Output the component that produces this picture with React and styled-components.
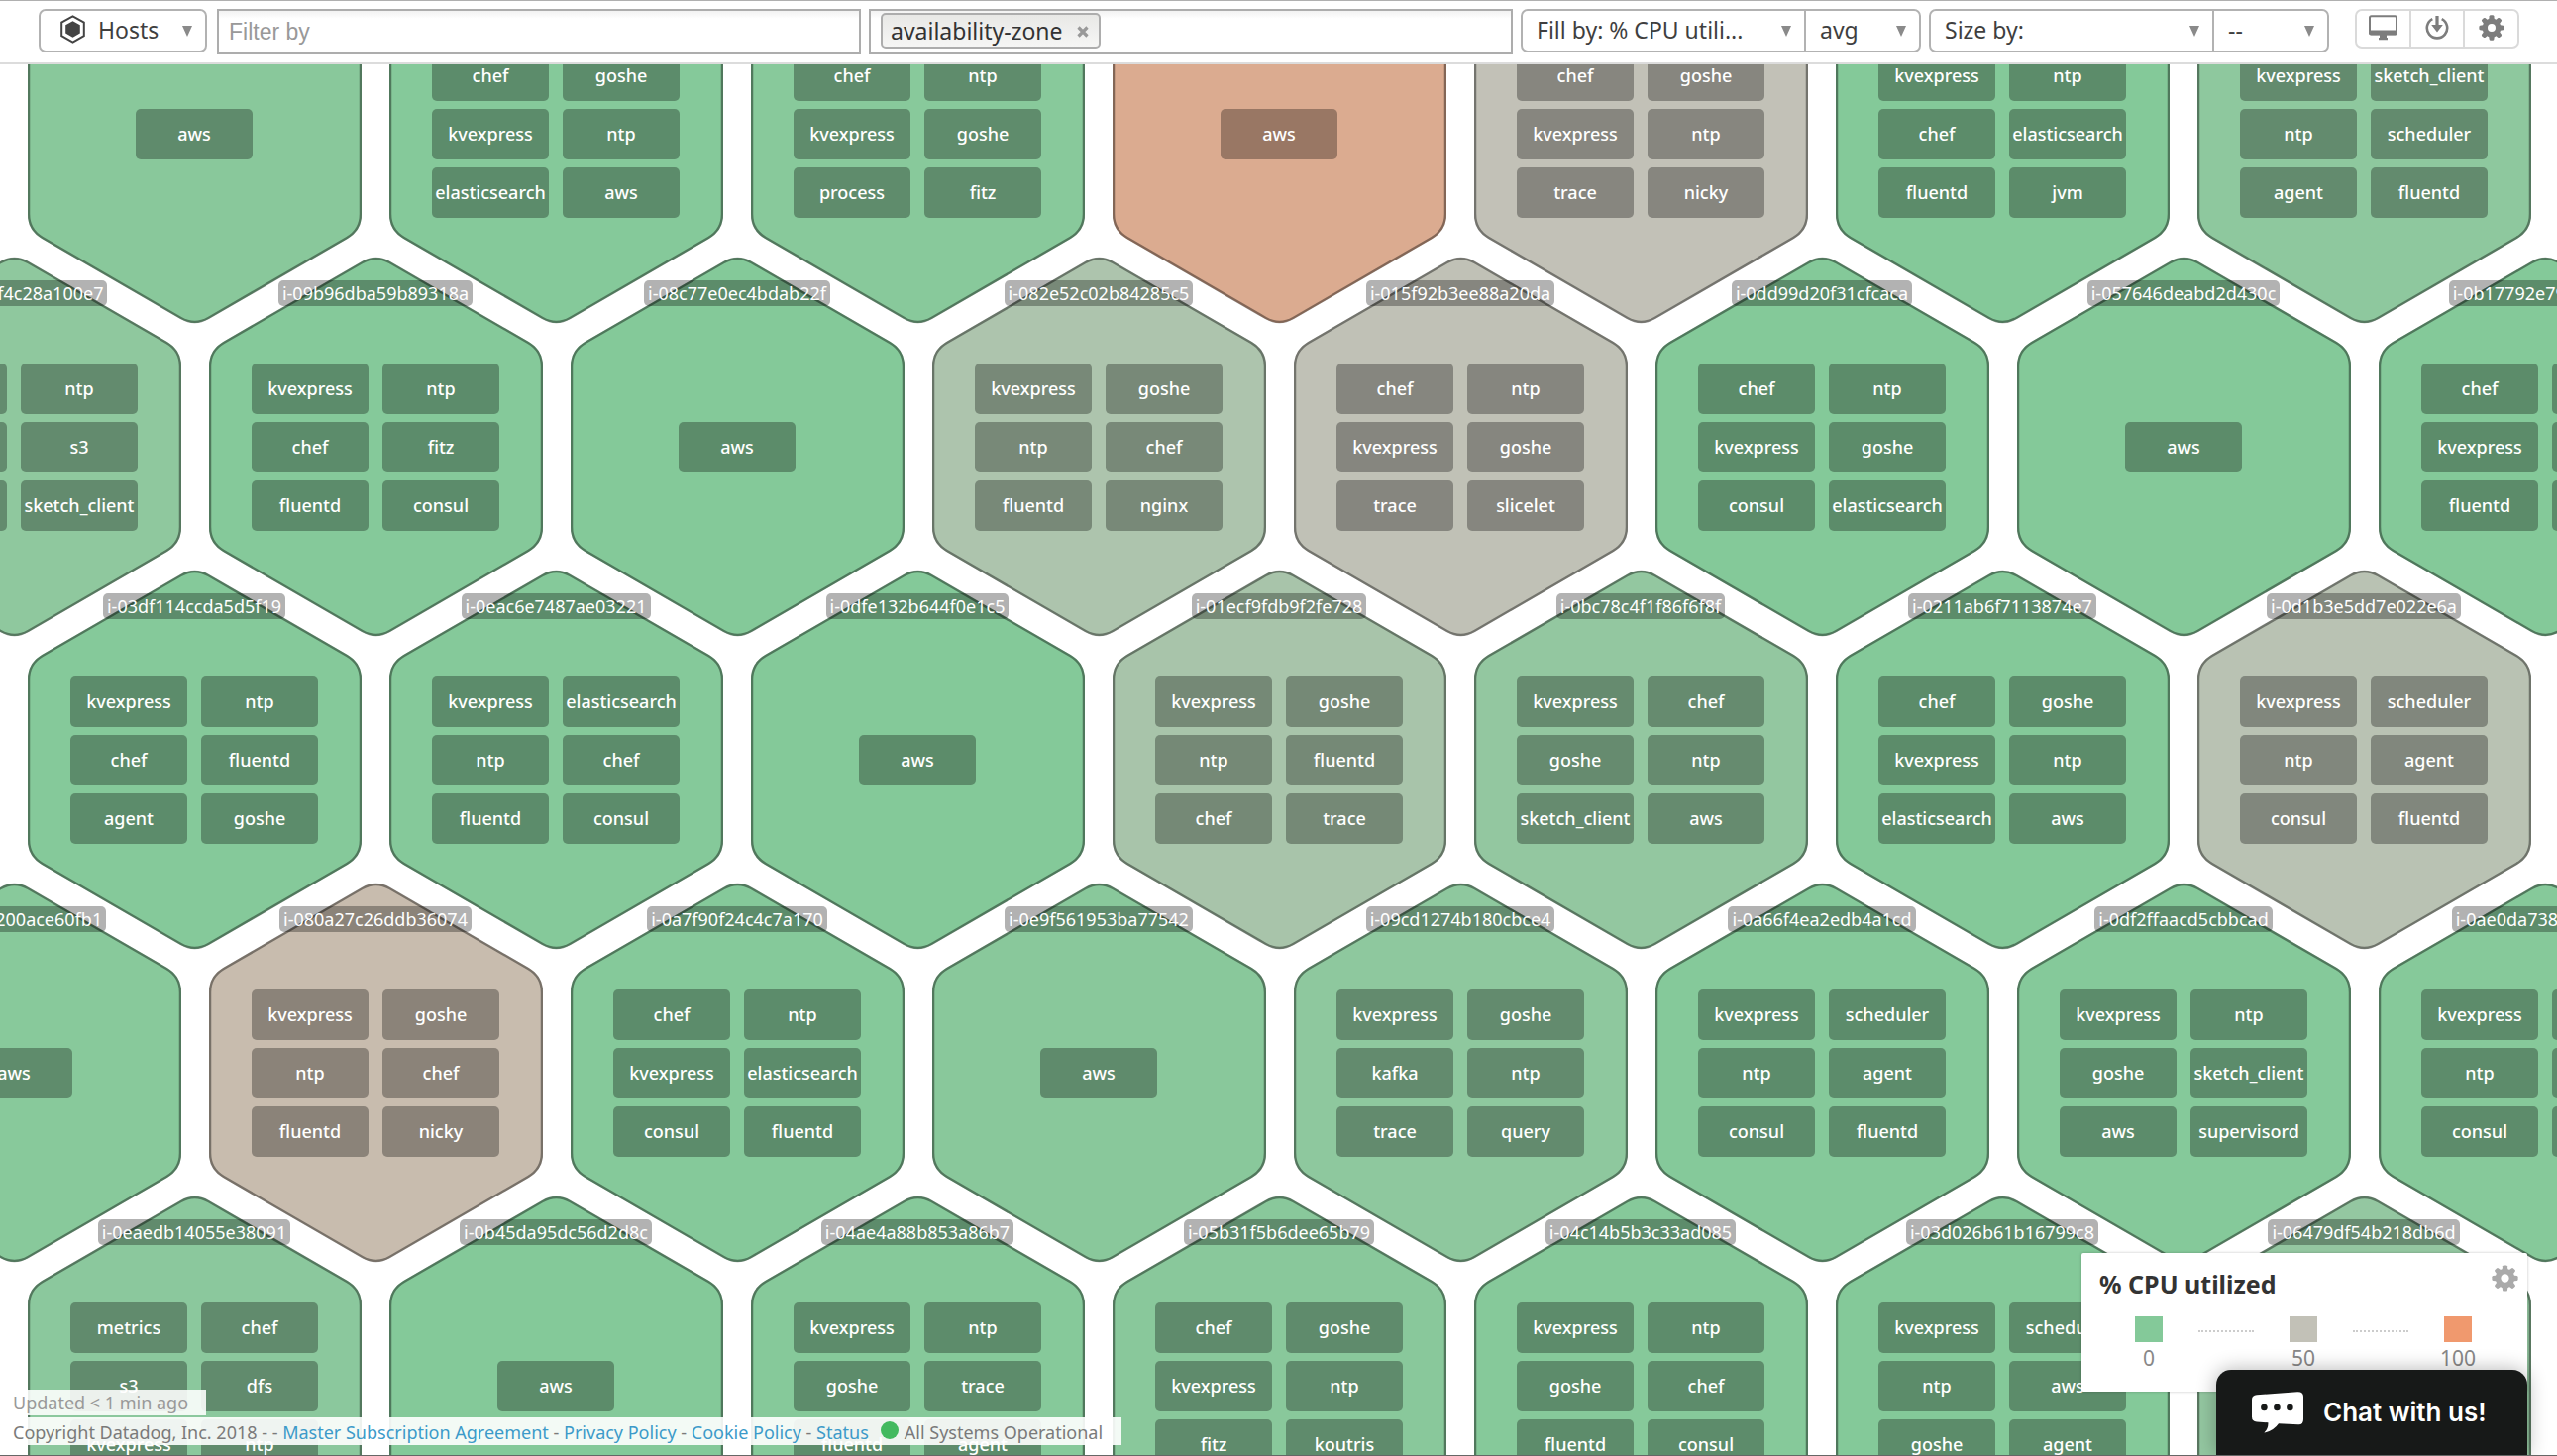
import React from "react";
import styled, { createGlobalStyle } from "styled-components";

const GlobalStyle = createGlobalStyle`
  *, *::before, *::after { box-sizing: border-box; }
  body {
    margin: 0;
    background: #fff;
    color: #3f3f3f;
    font-family: "Noto Sans", "Open Sans", sans-serif;
  }
  ul { margin: 0; padding: 0; list-style: none; }
`;

/* ---------- page ---------- */

const Page = styled.div`
  position: relative;
  display: flex;
  flex-direction: column;
  height: 100vh;
  overflow: hidden;
  border-top: 1px solid #b0b0b0;
  border-bottom: 1px solid #666;
`;

/* ---------- toolbar ---------- */

const Toolbar = styled.header`
  display: flex;
  flex: none;
  align-items: flex-start;
  gap: 8px;
  height: 64px;
  padding: 8px 38px 0 39px;
  border-bottom: 2px solid #dcdcdc;
  background: #fff;
`;

const SelectGroup = styled.div`
  display: flex;
  flex: none;
  width: ${(p) => p.$width}px;
  height: 44px;
  margin-right: ${(p) => (p.$lead ? 2 : 0)}px;
  border: 2px solid #b2b2b2;
  border-radius: 7px;
  background: #fff;
`;

const SelectBox = styled.div`
  position: relative;
  flex: ${(p) => (p.$narrow ? "none" : 1)};
  width: ${(p) => (p.$narrow ? "116px" : "auto")};
  border-left: ${(p) => (p.$narrow ? "2px solid #b2b2b2" : "0")};
`;

const Select = styled.select`
  width: 100%;
  height: 40px;
  padding: 0 32px 2px ${(p) => (p.$withIcon ? 58 : 14)}px;
  border: 0;
  background: transparent;
  color: #3f3f3f;
  font: 400 23px/38px "Noto Sans", "Open Sans", sans-serif;
  appearance: none;
`;

const Arrow = styled.span`
  position: absolute;
  top: 15px;
  right: 13px;
  border: 5px solid transparent;
  border-top: 11px solid #8a8a8a;
  border-bottom: 0;
  pointer-events: none;
`;

const HostsMark = styled.svg`
  position: absolute;
  top: 4px;
  left: 19px;
  pointer-events: none;
`;

const Field = styled.div`
  display: flex;
  flex: 1 1 0;
  min-width: 0;
  align-items: center;
  height: 46px;
  padding: 0 10px;
  border: 2px solid #adadad;
  background: linear-gradient(#f2f2f2, #fff 8px);
`;

const FieldInput = styled.input`
  flex: 1;
  min-width: 0;
  height: 40px;
  padding: 0;
  border: 0;
  outline: 0;
  background: transparent;
  color: #333;
  font: 400 23px/40px "Liberation Sans", Arial, sans-serif;
  &::placeholder { color: #999; opacity: 1; }
`;

const Chip = styled.span`
  display: flex;
  flex: none;
  align-items: center;
  gap: 14px;
  height: 36px;
  padding: 0 10px 0 8px;
  border: 2px solid #adadad;
  border-radius: 5px;
  background: linear-gradient(#e8e8e6, #f6f6f5);
  color: #333;
  font-size: 23px;
  line-height: 32px;
`;

const ChipRemove = styled.button`
  display: flex;
  padding: 2px 0 0;
  border: 0;
  background: none;
`;

const ChipField = styled(Field)`
  padding-bottom: 2px;
`;

const IconGroup = styled.div`
  display: flex;
  flex: none;
  width: 166px;
  height: 40px;
  margin-left: 18px;
  border: 2px solid #dadada;
  border-radius: 7px;
`;

const IconButton = styled.button`
  display: flex;
  flex: 1;
  align-items: center;
  justify-content: center;
  padding: 0 0 3px;
  border: 0;
  background: none;
  & + & { border-left: 2px solid #dadada; }
`;

/* ---------- host map ---------- */

const HostMap = styled.main`
  flex: 1;
  min-height: 0;
  overflow: hidden;
`;

const Board = styled.div`
  margin-top: -122px;
`;

const HexRow = styled.ul`
  display: flex;
  gap: 28px;
  width: max-content;
  margin: 0 0 -68px ${(p) => (p.$shifted ? -154 : -337)}px;
`;

const HexCell = styled.li`
  display: grid;
  flex: none;
  width: 337px;
  height: 384px;
  & > * { grid-area: 1 / 1; }
`;

const HexBody = styled.div`
  display: flex;
  flex-direction: column;
  align-items: center;
  padding: 24px 1px 0 0;
  color: #fff;
  font-size: 18px;
  white-space: nowrap;
`;

const HostName = styled.span`
  height: 26px;
  padding: 0 4px;
  border-radius: 5px;
  background: ${(p) => (p.$empty ? "none" : "rgba(0, 0, 0, 0.3)")};
  line-height: 26px;
`;

const Tags = styled.ul`
  display: grid;
  grid-template-columns: repeat(${(p) => p.$columns}, 118px);
  grid-auto-rows: 51px;
  gap: 8px 14px;
  align-content: center;
  height: 169px;
  margin-top: 58px;
`;

const Tag = styled.li`
  border-radius: 5px;
  background: rgba(0, 0, 0, 0.3);
  font-weight: 500;
  line-height: 51px;
  text-align: center;
`;

/* ---------- overlays ---------- */

const Footer = styled.footer`
  position: absolute;
  bottom: 10px;
  left: 0;
  display: flex;
  flex-direction: column;
  align-items: flex-start;
  gap: 2px;
  font-size: 18px;
`;

const Updated = styled.div`
  height: 26px;
  padding: 0 18px 0 13px;
  background: rgba(255, 255, 255, 0.88);
  color: #999;
  line-height: 26px;
`;

const Legal = styled.div`
  display: flex;
  align-items: center;
  height: 28px;
  padding: 2px 19px 0 13px;
  background: rgba(255, 255, 255, 0.9);
  color: #7a7a7a;
  line-height: 26px;
  white-space: pre;
  a { color: #3c9ac9; text-decoration: none; }
`;

const StatusDot = styled.span`
  width: 18px;
  height: 18px;
  margin: 0 6px 4px 12px;
  border-radius: 50%;
  background: #43b95f;
`;

const Legend = styled.section`
  position: absolute;
  right: 30px;
  bottom: 64px;
  width: 450px;
  height: 140px;
  padding-top: 13px;
  border-radius: 2px;
  background: #fff;
  box-shadow: 0 0 3px rgba(0, 0, 0, 0.25);
`;

const LegendHead = styled.div`
  display: flex;
  align-items: flex-start;
  justify-content: space-between;
  height: 51px;
  padding: 0 9px 0 18px;
`;

const LegendTitle = styled.h2`
  margin: 0;
  color: #333;
  font-size: 25px;
  font-weight: 700;
  line-height: 36px;
`;

const LegendSettings = styled.button`
  display: flex;
  margin-top: -1px;
  padding: 0;
  border: 0;
  background: none;
`;

const Scale = styled.div`
  display: flex;
  gap: 22px;
  padding: 0 42px 0 40px;
`;

const Stop = styled.div`
  display: flex;
  flex-direction: column;
  align-items: center;
  width: 56px;
  color: #888;
  font-size: 21px;
  line-height: 32px;
  &::before {
    content: "";
    width: 28px;
    height: 26px;
    background: ${(p) => p.$color};
  }
`;

const Dots = styled.span`
  flex: 1;
  height: 16px;
  border-bottom: 2px dotted #ccc;
`;

const ChatButton = styled.button`
  position: absolute;
  right: 30px;
  bottom: 0;
  display: flex;
  align-items: center;
  gap: 20px;
  width: 314px;
  height: 86px;
  padding: 0 0 0 36px;
  border: 0;
  border-radius: 15px 15px 0 0;
  background: #171918;
  box-shadow: 0 0 20px rgba(0, 0, 0, 0.3);
  color: #fff;
  font: 600 26px/30px Inter, "Noto Sans", sans-serif;
`;

/* ---------- drawings ---------- */

function Gear({ size, color }) {
  return (
    <svg width={size} height={size} viewBox="0 0 28 28" aria-hidden="true">
      <circle cx="14" cy="14" r="7.2" fill="none" stroke={color} strokeWidth="5.8" />
      {[0, 45, 90, 135, 180, 225, 270, 315].map((a) => (
        <path
          key={a}
          d="M10.8 6 L11.5 1.4 Q11.8 .4 12.8 .4 H15.2 Q16.2 .4 16.5 1.4 L17.2 6 Z"
          fill={color}
          transform={`rotate(${a} 14 14)`}
        />
      ))}
    </svg>
  );
}

function Monitor() {
  return (
    <svg width="29" height="26" viewBox="0 0 29 26" aria-hidden="true">
      <rect x="1" y="1.2" width="27" height="18" rx="1.6" fill="none" stroke="#7d7d7d" strokeWidth="2" />
      <path d="M0 15.5 H29 V18.6 Q29 20.4 27.2 20.4 H1.8 Q0 20.4 0 18.6 Z" fill="#7d7d7d" />
      <path d="M11 20 H18 V23 H19 V25.2 H10 V23 H11 Z" fill="#7d7d7d" />
    </svg>
  );
}

function PowerArrow() {
  return (
    <svg width="24" height="26" viewBox="0 0 24 26" aria-hidden="true">
      <path d="M7.3 4.1 A10.2 10.2 0 1 0 16.7 4.1" fill="none" stroke="#7d7d7d" strokeWidth="2.6" />
      <path d="M10.4 1 H13.6 V10 H17.8 L12 17.6 L6.2 10 H10.4 Z" fill="#7d7d7d" />
    </svg>
  );
}

function Cross() {
  return (
    <svg width="12" height="12" viewBox="0 0 12 12" aria-hidden="true">
      <path d="M1.5 1.5 L10.5 10.5 M10.5 1.5 L1.5 10.5" stroke="#999" strokeWidth="3.2" />
    </svg>
  );
}

function Bubble() {
  return (
    <svg width="52" height="42" viewBox="0 0 52 42" aria-hidden="true">
      <path
        d="M5 3.2 L46 .3 Q52 0 52 5 V28 Q52 33.4 47 33.2 L27 32.2 Q22 39.5 12.4 41.6 Q16.8 37 16.4 31.2 L5 30.6 Q0 30.2 0 25.6 V8 Q0 3.6 5 3.2 Z"
        fill="#fff"
      />
      <circle cx="12.4" cy="16" r="3.3" fill="#171918" />
      <circle cx="25.4" cy="16" r="3.3" fill="#171918" />
      <circle cx="38.4" cy="16" r="3.3" fill="#171918" />
    </svg>
  );
}

const CORNERS = [
  [168.5, -2],
  [336, 95],
  [336, 289],
  [168.5, 386],
  [1, 289],
  [1, 95],
];

function roundedPath(points, cut) {
  const toward = ([x1, y1], [x2, y2]) => {
    const k = cut / Math.hypot(x2 - x1, y2 - y1);
    return `${(x1 + (x2 - x1) * k).toFixed(2)} ${(y1 + (y2 - y1) * k).toFixed(2)}`;
  };
  const n = points.length;
  return (
    points
      .map((p, i) => {
        const before = toward(p, points[(i + n - 1) % n]);
        const after = toward(p, points[(i + 1) % n]);
        return `${i ? "L" : "M"}${before} Q${p[0]} ${p[1]} ${after}`;
      })
      .join(" ") + " Z"
  );
}

const HEX_PATH = roundedPath(CORNERS, 16);

/* ---------- data ---------- */

const LOW = [132, 201, 153];
const MID = [194, 193, 183];
const HIGH = [240, 153, 110];

function cpuColor(cpu) {
  const [a, b, t] = cpu <= 50 ? [LOW, MID, cpu / 50] : [MID, HIGH, (cpu - 50) / 50];
  return `rgb(${a.map((v, i) => Math.round(v + (b[i] - v) * t)).join(", ")})`;
}

const host = (name, cpu, tags) => ({ name, cpu, tags: tags ? tags.split(" ") : [] });

const ROWS = [
  [
    host("", 1, ""),
    host("", 4, "aws"),
    host("", 1, "chef goshe kvexpress ntp elasticsearch aws"),
    host("", 3, "chef ntp kvexpress goshe process fitz"),
    host("", 77, "aws"),
    host("", 50, "chef goshe kvexpress ntp trace nicky"),
    host("", 0, "kvexpress ntp chef elasticsearch fluentd jvm"),
    host("", 8, "kvexpress sketch_client ntp scheduler agent fluentd"),
  ],
  [
    host("i-0b52d9f4c28a100e7", 9, "chef ntp aws s3 fluentd sketch_client"),
    host("i-09b96dba59b89318a", 1, "kvexpress ntp chef fitz fluentd consul"),
    host("i-08c77e0ec4bdab22f", 0, "aws"),
    host("i-082e52c02b84285c5", 33, "kvexpress goshe ntp chef fluentd nginx"),
    host("i-015f92b3ee88a20da", 48, "chef ntp kvexpress goshe trace slicelet"),
    host("i-0dd99d20f31cfcaca", 0, "chef ntp kvexpress goshe consul elasticsearch"),
    host("i-057646deabd2d430c", 0, "aws"),
    host("i-0b17792e79d6bd0ca", 0, "chef ntp kvexpress goshe fluentd aws"),
  ],
  [
    host("", 1, ""),
    host("i-03df114ccda5d5f19", 1, "kvexpress ntp chef fluentd agent goshe"),
    host("i-0eac6e7487ae03221", 1, "kvexpress elasticsearch ntp chef fluentd consul"),
    host("i-0dfe132b644f0e1c5", 0, "aws"),
    host("i-01ecf9fdb9f2fe728", 29, "kvexpress goshe ntp fluentd chef trace"),
    host("i-0bc78c4f1f86f6f8f", 12, "kvexpress chef goshe ntp sketch_client aws"),
    host("i-0211ab6f7113874e7", 0, "chef goshe kvexpress ntp elasticsearch aws"),
    host("i-0d1b3e5dd7e022e6a", 43, "kvexpress scheduler ntp agent consul fluentd"),
  ],
  [
    host("i-0e46c1200ace60fb1", 3, "aws"),
    host("i-080a27c26ddb36074", 56, "kvexpress goshe ntp chef fluentd nicky"),
    host("i-0a7f90f24c4c7a170", 1, "chef ntp kvexpress elasticsearch consul fluentd"),
    host("i-0e9f561953ba77542", 4, "aws"),
    host("i-09cd1274b180cbce4", 8, "kvexpress goshe kafka ntp trace query"),
    host("i-0a66f4ea2edb4a1cd", 1, "kvexpress scheduler ntp agent consul fluentd"),
    host("i-0df2ffaacd5cbbcad", 1, "kvexpress ntp goshe sketch_client aws supervisord"),
    host("i-0ae0da738e2f4b6c1", 2, "kvexpress aws ntp chef consul fitz"),
  ],
  [
    host("", 1, ""),
    host("i-0eaedb14055e38091", 6, "metrics chef s3 dfs kvexpress ntp"),
    host("i-0b45da95dc56d2d8c", 0, "aws"),
    host("i-04ae4a88b853a86b7", 2, "kvexpress ntp goshe trace fluentd agent"),
    host("i-05b31f5b6dee65b79", 4, "chef goshe kvexpress ntp fitz koutris"),
    host("i-04c14b5b3c33ad085", 2, "kvexpress ntp goshe chef fluentd consul"),
    host("i-03d026b61b16799c8", 0, "kvexpress scheduler ntp aws goshe agent"),
    host("i-06479df54b218db6d", 13, "kvexpress ntp chef goshe fluentd aws"),
  ],
];

/* ---------- parts ---------- */

function Hex({ name, cpu, tags }) {
  return (
    <HexCell>
      <svg width="337" height="384" viewBox="0 0 337 384" aria-hidden="true">
        <path d={HEX_PATH} fill={cpuColor(cpu)} stroke={cpuColor(cpu)} strokeWidth="2" />
        <path d={HEX_PATH} fill="none" stroke="rgba(0, 0, 0, 0.4)" strokeWidth="2.5" />
      </svg>
      <HexBody>
        <HostName $empty={!name}>{name}</HostName>
        <Tags $columns={tags.length > 1 ? 2 : 1}>
          {tags.map((tag) => (
            <Tag key={tag}>{tag}</Tag>
          ))}
        </Tags>
      </HexBody>
    </HexCell>
  );
}

function Picker({ label, text, narrow, withIcon, children }) {
  return (
    <SelectBox $narrow={narrow}>
      {children}
      <Select aria-label={label} $withIcon={withIcon} defaultValue={text}>
        <option value={text}>{text}</option>
      </Select>
      <Arrow />
    </SelectBox>
  );
}

export default function App() {
  return (
    <Page>
      <GlobalStyle />
      <Toolbar>
        <SelectGroup $width={170} $lead>
          <Picker label="Resource" text="Hosts" withIcon>
            <HostsMark width="27" height="29" viewBox="0 0 27 29" aria-hidden="true">
              <path d="M13.5 1.4 L24.8 7.6 V21.2 L13.5 27.6 L2.2 21.2 V7.6 Z" fill="none" stroke="#444" strokeWidth="2" />
              <path d="M13.5 6.2 L20.8 10.3 V18.6 L13.5 22.8 L6.2 18.6 V10.3 Z" fill="#444" />
            </HostsMark>
          </Picker>
        </SelectGroup>
        <Field>
          <FieldInput type="text" placeholder="Filter by" aria-label="Filter by" />
        </Field>
        <ChipField>
          <Chip>
            availability-zone
            <ChipRemove type="button" aria-label="Remove availability-zone">
              <Cross />
            </ChipRemove>
          </Chip>
          <FieldInput type="text" aria-label="Group by" />
        </ChipField>
        <SelectGroup $width={404}>
          <Picker label="Fill by" text="Fill by: % CPU utili..." />
          <Picker label="Fill aggregation" text="avg" narrow />
        </SelectGroup>
        <SelectGroup $width={404}>
          <Picker label="Size by" text="Size by:" />
          <Picker label="Size aggregation" text="--" narrow />
        </SelectGroup>
        <IconGroup>
          <IconButton type="button" aria-label="Full screen">
            <Monitor />
          </IconButton>
          <IconButton type="button" aria-label="Save view">
            <PowerArrow />
          </IconButton>
          <IconButton type="button" aria-label="Settings">
            <Gear size={26} color="#7d7d7d" />
          </IconButton>
        </IconGroup>
      </Toolbar>

      <HostMap>
        <Board>
          {ROWS.map((row, r) => (
            <HexRow key={r} $shifted={r % 2 === 1}>
              {row.map((h, i) => (
                <Hex key={i} {...h} />
              ))}
            </HexRow>
          ))}
        </Board>
      </HostMap>

      <Footer>
        <Updated>Updated &lt; 1 min ago</Updated>
        <Legal>
          {"Copyright Datadog, Inc. 2018 - - "}
          <a href="#agreement">Master Subscription Agreement</a>
          {" - "}
          <a href="#privacy">Privacy Policy</a>
          {" - "}
          <a href="#cookies">Cookie Policy</a>
          {" - "}
          <a href="#status">Status</a>
          <StatusDot />
          All Systems Operational
        </Legal>
      </Footer>

      <Legend>
        <LegendHead>
          <LegendTitle>% CPU utilized</LegendTitle>
          <LegendSettings type="button" aria-label="Legend settings">
            <Gear size={27} color="#aaa" />
          </LegendSettings>
        </LegendHead>
        <Scale>
          <Stop $color={cpuColor(0)}>0</Stop>
          <Dots />
          <Stop $color={cpuColor(50)}>50</Stop>
          <Dots />
          <Stop $color={cpuColor(100)}>100</Stop>
        </Scale>
      </Legend>

      <ChatButton type="button">
        <Bubble />
        Chat with us!
      </ChatButton>
    </Page>
  );
}
